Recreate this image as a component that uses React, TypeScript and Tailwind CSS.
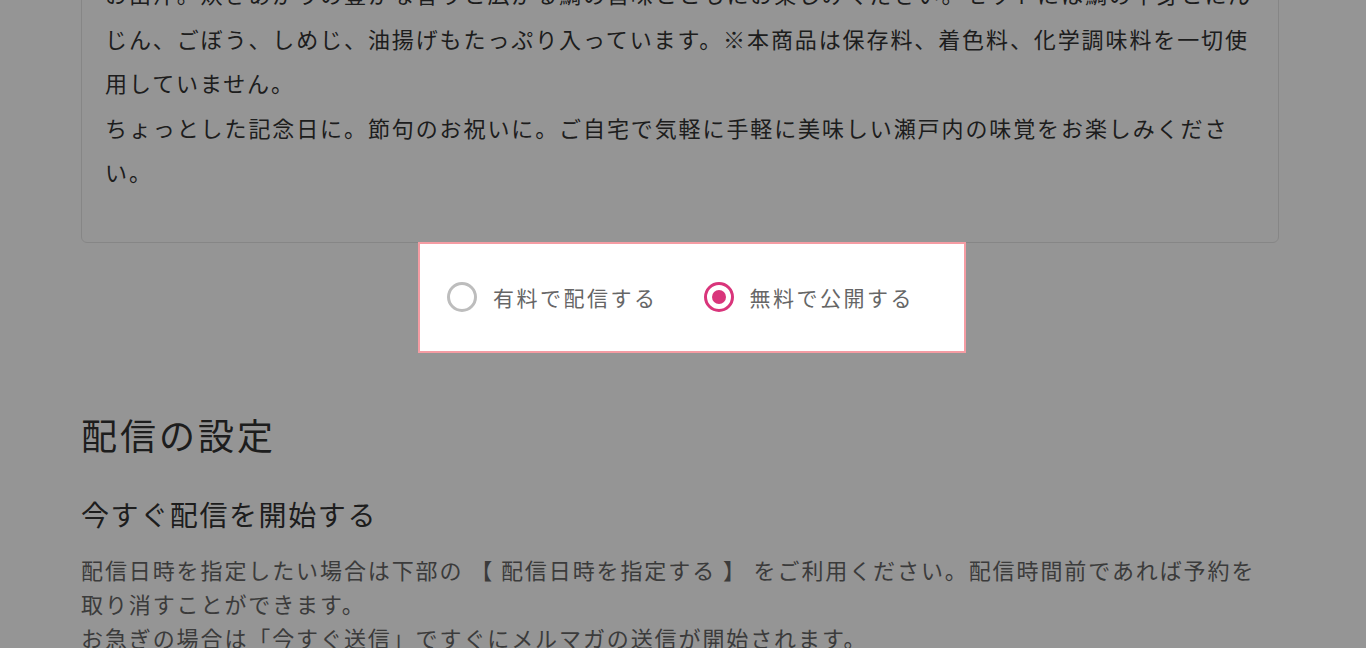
import React from 'react';

const jp = { fontFamily: '"Noto Sans CJK JP", "Noto Sans", sans-serif' };

function Radio({ checked, label }: { checked: boolean; label: string }) {
  return (
    <label className="flex items-center gap-[16px] cursor-pointer">
      {checked ? (
        <span className="flex h-[30px] w-[30px] items-center justify-center rounded-full border-[3px] border-[#d9357b]">
          <span className="h-[14px] w-[14px] rounded-full bg-[#d9357b]" />
        </span>
      ) : (
        <span className="h-[30px] w-[30px] rounded-full border-[3px] border-[#bdbdbd]" />
      )}
      <span className="text-[21px] leading-[30px] tracking-[2.5px] text-[#666]">{label}</span>
    </label>
  );
}

export default function App() {
  return (
    <div className="relative h-[648px] overflow-hidden bg-white" style={jp}>
      <div className="ml-[81px] w-[1198px]">
        {/* product description card (scrolled, top cut off) */}
        <div className="mt-[-54px] rounded-md border border-[#e6e6e6] bg-white pl-[23px] pr-[24px] pt-[24px] pb-[48px]">
          <p className="text-[22px] leading-[44.5px] tracking-[1.9px] text-[#333]">
            お出汁。炊きあがりの豊かな香りと広がる鯛の旨味とともにお楽しみください。セットには鯛の半身とにんじん、ごぼう、しめじ、油揚げもたっぷり入っています。※本商品は保存料、着色料、化学調味料を一切使用していません。
            <br />
            ちょっとした記念日に。節句のお祝いに。ご自宅で気軽に手軽に美味しい瀬戸内の味覚をお楽しみください。
          </p>
        </div>

        {/* highlighted step */}
        <div className="relative z-20 mt-[-1px] ml-[337px] flex h-[111px] w-[548px] items-center border-2 border-[#f59ca3] bg-white pl-[27px]">
          <Radio checked={false} label="有料で配信する" />
          <div className="w-[46px]" />
          <Radio checked={true} label="無料で公開する" />
        </div>

        {/* delivery settings */}
        <h2 className="mt-[56px] text-[36px] leading-[50px] tracking-[3px] text-[#333]">配信の設定</h2>
        <h3 className="mt-[35px] text-[28px] leading-[40px] tracking-[1.6px] text-[#333]">今すぐ配信を開始する</h3>
        <p className="mt-[18px] text-[22px] leading-[34px] tracking-[1.9px] text-[#666]">
          配信日時を指定したい場合は下部の 【 配信日時を指定する 】 をご利用ください。配信時間前であれば予約を取り消すことができます。
          <br />
          お急ぎの場合は「今すぐ送信」ですぐにメルマガの送信が開始されます。
        </p>
      </div>

      {/* tour overlay */}
      <div className="absolute inset-0 z-10 bg-[rgba(0,0,0,0.415)]" />
    </div>
  );
}
